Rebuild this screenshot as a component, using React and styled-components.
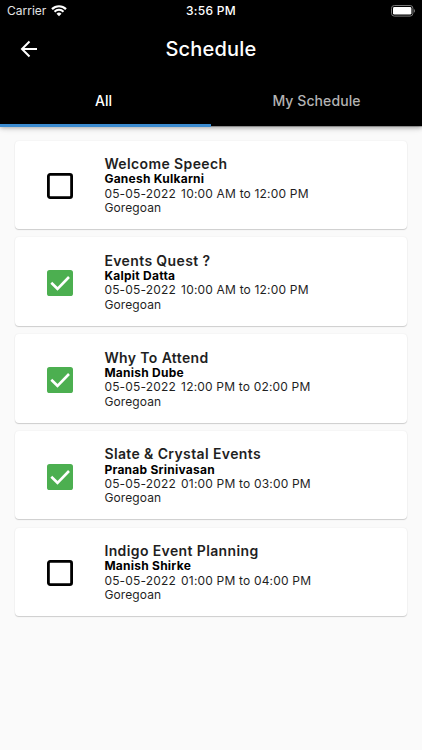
import React, { useState } from "react";
import styled, { createGlobalStyle } from "styled-components";

const GlobalStyle = createGlobalStyle`
  * {
    box-sizing: border-box;
  }
  body {
    margin: 0;
    background-color: #fafafa;
    font-family: Inter, "Liberation Sans", sans-serif;
  }
  p,
  h1,
  h2 {
    margin: 0;
  }
`;

const Screen = styled.div`
  width: 100%;
  min-height: 750px;
  background-color: #fafafa;
`;

const Header = styled.header`
  background-color: #000;
  color: white;
  box-shadow: 0 1px 0 rgba(0, 0, 0, 0.25), 0 2px 4px rgba(0, 0, 0, 0.25),
    0 1px 8px rgba(0, 0, 0, 0.14);
`;

const StatusBar = styled.div`
  height: 22px;
  display: grid;
  grid-template-columns: 1fr auto 1fr;
  align-items: center;
  padding: 0 7px 0 7px;
  font-size: 12px;
  line-height: 22px;
  .carrier {
    display: flex;
    align-items: center;
    gap: 4.5px;
    color: #e4e4e4;
  }
  .clock {
    font-weight: 500;
    letter-spacing: 0.3px;
  }
  .battery {
    justify-self: end;
    display: flex;
  }
`;

const TitleBar = styled.div`
  height: 54px;
  display: grid;
  grid-template-columns: 58px 1fr 58px;
  align-items: center;
  h1 {
    font-size: 20px;
    font-weight: 500;
    line-height: 24px;
    letter-spacing: 0.2px;
    text-align: center;
  }
`;

const BackButton = styled.button`
  display: flex;
  justify-content: center;
  padding: 0;
  border: none;
  background: none;
  color: white;
  cursor: pointer;
`;

const Tabs = styled.div`
  display: flex;
  height: 50px;
`;

const Tab = styled.button`
  flex: 0 0 50%;
  margin-bottom: ${({ $active }) => ($active ? "-1px" : "0")};
  padding: ${({ $active }) => ($active ? "1px 4px 0 0" : "0")};
  border: none;
  border-bottom: ${({ $active }) =>
    $active ? "3px solid #3b8bd0" : "2px solid #000"};
  background: none;
  color: ${({ $active }) => ($active ? "#fff" : "#b3b3b3")};
  font-family: inherit;
  font-size: 14px;
  font-weight: 500;
  letter-spacing: 0.08px;
  cursor: pointer;
`;

const EventList = styled.main`
  display: flex;
  flex-direction: column;
  gap: 8.25px;
  padding: 14.7px 15px 0;
`;

const Card = styled.article`
  height: 88.5px;
  display: flex;
  align-items: center;
  border-radius: 4px;
  background-color: white;
  box-shadow: 0 1px 1px rgba(0, 0, 0, 0.17), 0 0 2px rgba(0, 0, 0, 0.07);
`;

const CheckButton = styled.button`
  width: 89.4px;
  display: flex;
  justify-content: center;
  padding: 3px 0 0 1px;
  border: none;
  background: none;
  cursor: pointer;
`;

const Details = styled.div`
  padding-top: 0.8px;
  font-size: 12px;
  line-height: 14.4px;
  color: #1f1f1f;
  white-space: nowrap;
  .title {
    font-size: 14px;
    font-weight: 600;
    line-height: 17.2px;
    letter-spacing: 0.38px;
  }
  .speaker {
    font-weight: 700;
    letter-spacing: 0.25px;
    color: #000;
  }
  .time {
    display: flex;
    gap: 5px;
    letter-spacing: 0.18px;
  }
  .place {
    letter-spacing: 0.12px;
  }
`;

const events = [
  {
    id: 1,
    title: "Welcome Speech",
    speaker: "Ganesh Kulkarni",
    date: "05-05-2022",
    time: "10:00 AM to 12:00 PM",
    place: "Goregoan",
    checked: false,
  },
  {
    id: 2,
    title: "Events Quest ?",
    speaker: "Kalpit Datta",
    date: "05-05-2022",
    time: "10:00 AM to 12:00 PM",
    place: "Goregoan",
    checked: true,
  },
  {
    id: 3,
    title: "Why To Attend",
    speaker: "Manish Dube",
    date: "05-05-2022",
    time: "12:00 PM to 02:00 PM",
    place: "Goregoan",
    checked: true,
  },
  {
    id: 4,
    title: "Slate & Crystal Events",
    speaker: "Pranab Srinivasan",
    date: "05-05-2022",
    time: "01:00 PM to 03:00 PM",
    place: "Goregoan",
    checked: true,
  },
  {
    id: 5,
    title: "Indigo Event Planning",
    speaker: "Manish Shirke",
    date: "05-05-2022",
    time: "01:00 PM to 04:00 PM",
    place: "Goregoan",
    checked: false,
  },
];

const WifiIcon = () => (
  <svg width="16" height="12" viewBox="0 0 16 12" fill="none">
    <path d="M1 4.1a10 10 0 0 1 14 0" stroke="#fff" strokeWidth="2.2" />
    <path d="M3.5 6.7a6.4 6.4 0 0 1 9 0" stroke="#fff" strokeWidth="2" />
    <path d="M8 11.2 5.5 8.7a3.6 3.6 0 0 1 5 0z" fill="#fff" />
  </svg>
);

const BatteryIcon = () => (
  <svg width="25" height="12" viewBox="0 0 25 12">
    <rect x="1.5" y="0.5" width="21.4" height="10.6" rx="2.8" fill="none" stroke="#777" />
    <rect x="3" y="2" width="18.4" height="7.6" rx="1.4" fill="#fff" />
    <path d="M23.8 4v3.7c.7-.3 1.2-1 1.2-1.8S24.500 4.300 23.800 4z" fill="#777" />
  </svg>
);

const CheckIcon = ({ checked }) => (
  <svg width="26" height="26" viewBox="0 0 26 26" fill="none">
    {checked ? (
      <>
        <rect width="26" height="26" rx="2.6" fill="#4caf50" />
        <path d="m4.3 12.7 6.2 6.1L22 7" stroke="#fff" strokeWidth="2.6" />
      </>
    ) : (
      <rect x="1.4" y="1.4" width="23.2" height="23.2" rx="1.8" stroke="#000" strokeWidth="2.8" />
    )}
  </svg>
);

const App = () => {
  const [tab, setTab] = useState("All");
  const [items, setItems] = useState(events);

  // add or remove event from my schedule
  const handleToggle = (id) => {
    setItems(
      items.map((item) =>
        item.id === id ? { ...item, checked: !item.checked } : item
      )
    );
  };

  const visible = tab === "All" ? items : items.filter((item) => item.checked);

  return (
    <Screen>
      <GlobalStyle />
      <Header>
        <StatusBar>
          <span className="carrier">
            Carrier <WifiIcon />
          </span>
          <span className="clock">3:56 PM</span>
          <span className="battery">
            <BatteryIcon />
          </span>
        </StatusBar>
        <TitleBar>
          <BackButton aria-label="Back">
            <svg width="18" height="18" viewBox="0 0 18 18" fill="none">
              <path d="M17 9H2.2M9.5 1.5 2 9l7.5 7.5" stroke="#fff" strokeWidth="2" />
            </svg>
          </BackButton>
          <h1>Schedule</h1>
        </TitleBar>
        <Tabs>
          {["All", "My Schedule"].map((name) => (
            <Tab key={name} $active={tab === name} onClick={() => setTab(name)}>
              {name}
            </Tab>
          ))}
        </Tabs>
      </Header>
      <EventList>
        {visible.map((item) => (
          <Card key={item.id}>
            <CheckButton
              aria-label={item.title}
              onClick={() => handleToggle(item.id)}
            >
              <CheckIcon checked={item.checked} />
            </CheckButton>
            <Details>
              <h2 className="title">{item.title}</h2>
              <p className="speaker">{item.speaker}</p>
              <p className="time">
                <span>{item.date}</span>
                <span>{item.time}</span>
              </p>
              <p className="place">{item.place}</p>
            </Details>
          </Card>
        ))}
      </EventList>
    </Screen>
  );
};

export default App;
